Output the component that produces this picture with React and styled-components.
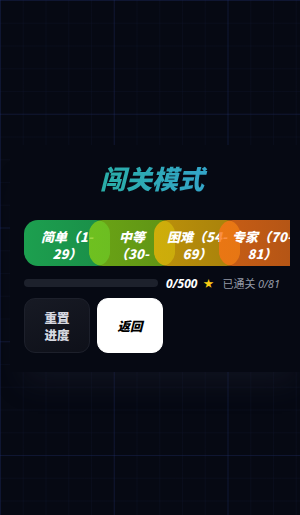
import React from 'react'
import styled, { createGlobalStyle } from 'styled-components'

const GlobalStyle = createGlobalStyle`
  html, body {
    margin: 0;
    padding: 0;
    background: #060913;
    overflow: hidden;
  }
  * { box-sizing: border-box; }
`

const levels = [
  { lines: ['简单（1-', '29）'], color: '34, 197, 94' },
  { lines: ['中等', '（30-'], color: '132, 204, 22' },
  { lines: ['困难（54-', '69）'], color: '234, 179, 8' },
  { lines: ['专家（70-', '81）'], color: '249, 115, 22' },
]

const App = () => {
  return (
    <Screen>
      <GlobalStyle />
      <Panel>
        <Title>闯关模式</Title>
        <TabRow>
          {levels.map((lv, i) => (
            <Tab key={i} $rgb={lv.color}>
              {lv.lines.map((l, j) => <span key={j}>{l}</span>)}
            </Tab>
          ))}
        </TabRow>
        <ProgressRow>
          <Bar />
          <Score>0/500</Score>
          <Star>★</Star>
          <Cleared>已通关 <i>0/81</i></Cleared>
        </ProgressRow>
        <ButtonRow>
          <ActionButton>重置<br />进度</ActionButton>
          <ActionButton $primary>返回</ActionButton>
        </ButtonRow>
      </Panel>
    </Screen>
  )
}

export default App

const Screen = styled.div`
  width: 300px;
  height: 515px;
  overflow: hidden;
  padding-top: 145px;
  background-color: #060913;
  background-image:
    linear-gradient(to right, rgba(40, 60, 140, 0.2) 1px, transparent 1px),
    linear-gradient(to bottom, rgba(40, 60, 140, 0.2) 1px, transparent 1px),
    linear-gradient(to right, rgba(40, 55, 110, 0.09) 1px, transparent 1px),
    linear-gradient(to bottom, rgba(40, 55, 110, 0.09) 1px, transparent 1px);
  background-size: 113.75px 113.75px, 113.75px 113.75px, 22.75px 22.75px, 22.75px 22.75px;
  font-family: "Noto Sans CJK SC", "Noto Sans", sans-serif;
`

const Panel = styled.div`
  margin-left: 10px;
  width: 300px;
  padding: 15px 30px 19px 14px;
  background: #060913;
  box-shadow: 0 24px 28px -14px rgba(40, 44, 64, 0.3);
`

const Title = styled.h1`
  margin: 0 0 24px;
  text-align: center;
  font-size: 26px;
  line-height: 36px;
  font-weight: 900;
  font-style: italic;
  background: linear-gradient(90deg, #22b48f, #3b9fe0);
  -webkit-background-clip: text;
  background-clip: text;
  color: transparent;
`

const TabRow = styled.div`
  display: flex;
  height: 46px;
  margin-right: -10px;
  overflow: hidden;
`

const Tab = styled.div`
  flex: 0 0 86px;
  height: 46px;
  padding-top: 8px;
  border-radius: 14px;
  display: flex;
  flex-direction: column;
  align-items: center;
  background: linear-gradient(90deg, rgba(${p => p.$rgb}, 0.8), rgba(${p => p.$rgb}, 0.7));
  color: #fff;
  font-size: 13px;
  line-height: 17px;
  font-weight: 900;
  font-style: italic;
  white-space: nowrap;

  & + & {
    margin-left: -21px;
  }

  span { display: block; }
`

const ProgressRow = styled.div`
  display: flex;
  align-items: center;
  margin-top: 12px;
  height: 10px;
  gap: 6px;
`

const Bar = styled.div`
  flex: 1;
  height: 8px;
  border-radius: 4px;
  background: #1d212c;
  margin-right: 2px;
`

const Score = styled.span`
  color: #fff;
  font-family: "Noto Sans", sans-serif;
  font-size: 12px;
  font-weight: 700;
  font-style: italic;
`

const Star = styled.span`
  color: #facc15;
  font-size: 10px;
  line-height: 10px;
`

const Cleared = styled.span`
  margin-left: 3px;
  color: #9499a6;
  font-size: 11px;
  i { font-family: "Noto Sans", sans-serif; }
`

const ButtonRow = styled.div`
  display: flex;
  gap: 7px;
  margin-top: 10px;
`

const ActionButton = styled.button`
  width: 66px;
  height: 55px;
  border-radius: 11px;
  border: 1px solid ${p => (p.$primary ? '#fff' : '#1d202b')};
  background: ${p => (p.$primary ? '#fff' : 'linear-gradient(160deg, #171a24, #0e1019)')};
  color: ${p => (p.$primary ? '#000' : '#d6d8e0')};
  font-family: "Noto Sans CJK SC", sans-serif;
  font-size: 12.5px;
  line-height: 17px;
  font-weight: 900;
  font-style: ${p => (p.$primary ? 'italic' : 'normal')};
  padding: 0;
`
